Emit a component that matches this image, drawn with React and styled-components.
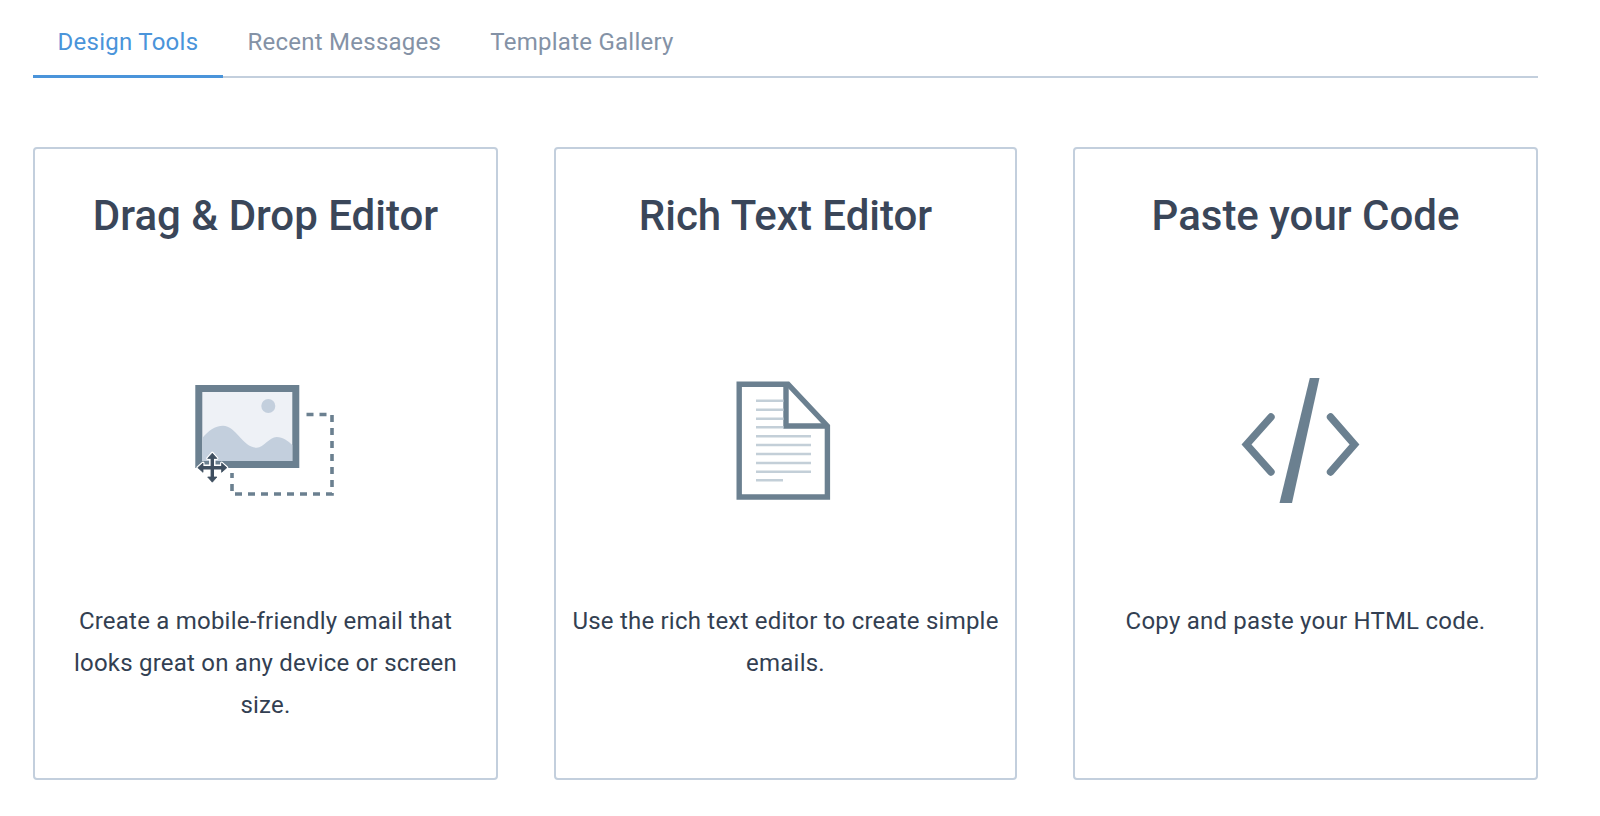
import React from "react";
import styled, { createGlobalStyle } from "styled-components";

const Global = createGlobalStyle`
  html, body { margin: 0; padding: 0; background: #fff; }
  body { font-family: Roboto, "Liberation Sans", sans-serif; }
`;
const Page = styled.div`
  width: 1600px; height: 816px; box-sizing: border-box; padding: 0 62px 0 33px; overflow: hidden;
`;
const Tabs = styled.div`
  display: flex; height: 78px; box-sizing: border-box; border-bottom: 2px solid #c3cfdd;
`;
const Tab = styled.div`
  height: 78px; box-sizing: border-box; padding: 27px 24.6px 0; font-size: 24px; line-height: 30px; letter-spacing: 0.25px;
  color: ${p => (p.$active ? "#4a94da" : "#8492a6")};
  border-bottom: 3px solid ${p => (p.$active ? "#4a94da" : "transparent")};
`;
const Cards = styled.div`
  display: grid; grid-template-columns: 465px 463px 465px; column-gap: 56px; margin-top: 69px;
`;
const Card = styled.div`
  height: 633px; box-sizing: border-box; border: 2px solid #c3cfdd; border-radius: 4px; padding: 0 14px;
  display: flex; flex-direction: column; align-items: center; text-align: center;
`;
const Title = styled.h2`
  margin: 42px 0 0; font-size: 42px; line-height: 50px; font-weight: 500; color: #3a4659; white-space: nowrap;
`;
const IconSlot = styled.div`
  height: 126px; margin-top: 137px; width: 100%; display: flex; align-items: center; justify-content: center;
`;
const Desc = styled.p`
  margin: 96px 0 0; font-size: 24px; line-height: 42px; letter-spacing: 0.22px; color: #333f52;
`;

const arrowHeads = "M212.3 453.2L216.9 458.4H207.7ZM212.3 482.2L216.9 477H207.7ZM197.8 467.7L203 463.1V472.3ZM226.8 467.7L221.6 463.1V472.3Z";
const arrowStems = "M212.3 457V478.4M201.6 467.7H223";

const DragIcon = () => (
  <svg width="141" height="126" viewBox="195 378 141 126">
    <path d="M306.5 414.5H332V494H232V473" fill="none" stroke="#6b8090" strokeWidth="3.6" strokeDasharray="7 6" />
    <rect x="198.8" y="388.5" width="97" height="76" fill="#eef1f6" stroke="#6b8090" strokeWidth="7" />
    <circle cx="268.3" cy="406" r="7" fill="#c3cfdd" />
    <path d="M202.3 438C208 431 215 425.7 223 425.7C236 425.7 243 447.7 256.7 447.7C264 447.7 269 437 276.7 437C283 437 288 441 292.3 445V461H202.3Z" fill="#c3cfdd" />
    <path d={arrowHeads} fill="#fff" stroke="#fff" strokeWidth="3" strokeLinejoin="round" />
    <path d={arrowStems} stroke="#fff" strokeWidth="6.4" />
    <path d={arrowStems} stroke="#3f4f60" strokeWidth="3.4" />
    <path d={arrowHeads} fill="#3f4f60" stroke="#3f4f60" strokeWidth="0.8" strokeLinejoin="round" />
  </svg>
);
const DocIcon = () => (
  <svg width="109" height="126" viewBox="731 378 109 126">
    <path d="M739.2 384.2H788L827.4 426V497H739.2Z" fill="#fff" stroke="#6b8090" strokeWidth="5.4" />
    <path d="M786 384.2V426H827.4" fill="none" stroke="#6b8090" strokeWidth="5.4" />
    <path d="M756 400.7H783.5M756 409.7H783.5M756 418.7H783.5M756 427.3H783.5M756 436.3H811M756 445H811M756 454H811M756 463H811M756 471.7H811M756 480.3H783" stroke="#c3cfd8" strokeWidth="2.6" />
  </svg>
);
const CodeIcon = () => (
  <svg width="140" height="126" viewBox="1235.5 378 140 126">
    <path d="M1270.5 417L1246 444.5L1270.5 472M1330 417L1354 444.5L1330 472" fill="none" stroke="#6b8090" strokeWidth="7.4" strokeLinecap="round" />
    <path d="M1309.3 378H1319L1291.5 503H1279Z" fill="#6b8090" />
  </svg>
);

export default function App() {
  return (
    <Page>
      <Global />
      <Tabs>
        <Tab $active>Design Tools</Tab>
        <Tab>Recent Messages</Tab>
        <Tab>Template Gallery</Tab>
      </Tabs>
      <Cards>
        <Card>
          <Title>Drag &amp; Drop Editor</Title>
          <IconSlot><DragIcon /></IconSlot>
          <Desc>Create a mobile-friendly email that looks great on any device or screen size.</Desc>
        </Card>
        <Card>
          <Title>Rich Text Editor</Title>
          <IconSlot><DocIcon /></IconSlot>
          <Desc>Use the rich text editor to create simple emails.</Desc>
        </Card>
        <Card>
          <Title>Paste your Code</Title>
          <IconSlot><CodeIcon /></IconSlot>
          <Desc>Copy and paste your HTML code.</Desc>
        </Card>
      </Cards>
    </Page>
  );
}
